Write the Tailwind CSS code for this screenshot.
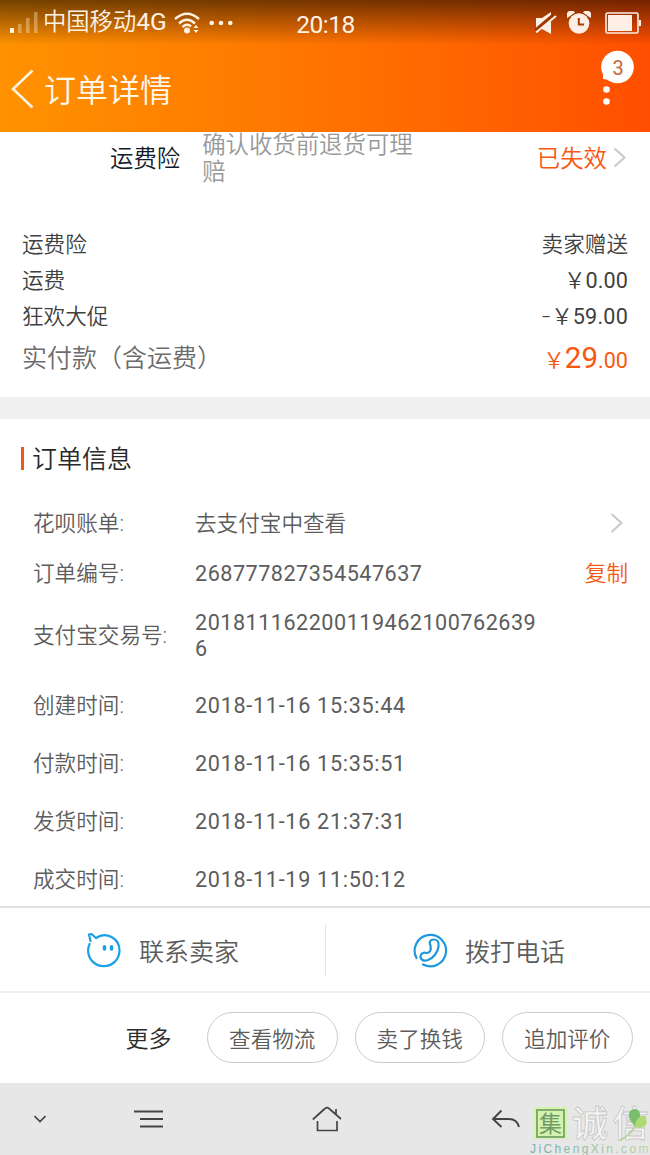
<!DOCTYPE html>
<html lang="zh-CN">
<head>
    <meta charset="UTF-8">
    <meta name="viewport" content="width=device-width, initial-scale=1.0">
    <title>订单详情</title>
    <script src="https://cdn.jsdelivr.net/npm/@tailwindcss/browser@4"></script>
</head>
<body class="w-[650px] h-[1155px] overflow-hidden bg-white font-['Roboto','Noto_Sans_CJK_SC',sans-serif] font-[350] text-[21.6px] leading-none text-[#5c5c5c]">
    <!-- Header -->
    <header class="h-[132px] bg-linear-to-r from-[#ff9200] to-[#ff4e00]">
        <div class="h-[45px] bg-linear-to-b from-black/55 to-transparent">
            <div class="grid grid-cols-3 items-center h-[45px] pl-[10px] pr-[9px] text-[#fff3e6]">
                <div class="flex items-center">
                    <svg class="w-[28px] h-[24px] shrink-0" viewBox="0 0 28 24" fill="#fff3e6">
                        <rect x="0" y="17" width="4" height="5"/>
                        <g opacity=".35">
                            <rect x="8" y="13" width="3.5" height="9"/>
                            <rect x="16" y="7" width="3.5" height="15"/>
                            <rect x="24" y="1" width="3.5" height="21"/>
                        </g>
                    </svg>
                    <span class="ml-[5px] text-[23.3px] font-[350] whitespace-nowrap">中国移动<span class="text-[24.5px] font-normal">4G</span></span>
                    <svg class="ml-[7px] w-[26px] h-[22px] shrink-0" viewBox="0 0 26 22" fill="none" stroke="#fff3e6" stroke-width="2.4">
                        <path d="M1 7Q13-3.500 25 7M5 11.500Q13 4 21 11.500M8.500 15Q13 11 17 14.500"/>
                        <circle cx="13" cy="18.500" r="3" fill="#fff3e6" stroke="none"/>
                        <path d="M19.500 16l2.500-3 2.500 3zM19.500 18l2.500 3 2.500-3z" fill="#fff3e6" stroke="none"/>
                    </svg>
                    <svg class="ml-[9px] w-[24px] h-[6px] shrink-0" viewBox="0 0 24 6" fill="#fff3e6">
                        <circle cx="2.700" cy="3" r="2.300"/><circle cx="12" cy="3" r="2.300"/><circle cx="21.300" cy="3" r="2.300"/>
                    </svg>
                </div>
                <div class="text-center text-[24.5px] font-normal pt-[5px] tracking-[-0.5px]">20:18</div>
                <div class="flex items-center justify-end">
                    <svg class="w-[22px] h-[24px]" viewBox="0 0 22 24">
                        <path d="M1 7h6l9-6v22l-9-5H1z" fill="#fdeee6"/>
                        <path d="M0 20L20 3" stroke="#9c3800" stroke-width="4"/>
                        <path d="M1 21.500L21 5" stroke="#fdeee6" stroke-width="2"/>
                    </svg>
                    <svg class="ml-[10px] w-[24px] h-[24px]" viewBox="0 0 24 24" fill="#fdeee6">
                        <path d="M.3 7A4.600 4.600 0 0 1 8 1.500zM23.700 7A4.600 4.600 0 0 0 16 1.500z"/>
                        <circle cx="12" cy="12.500" r="10.300"/>
                        <path d="M11.800 7v6.500H17" fill="none" stroke="#a53c00" stroke-width="2"/>
                    </svg>
                    <svg class="ml-[14px] w-[36px] h-[22px]" viewBox="0 0 36 22" fill="#fdeee6">
                        <rect x="1" y="1" width="32" height="20" rx="1.500" fill="none" stroke="#fdeee6" stroke-width="1.600"/>
                        <rect x="3" y="3" width="24" height="16"/>
                        <rect x="34" y="8" width="2" height="6"/>
                    </svg>
                </div>
            </div>
        </div>
        <div class="flex items-center h-[87px] pl-[11px] pr-[15px] text-[#fff9ef]">
            <svg class="w-[23px] h-[40px]" viewBox="0 0 23 40" fill="none" stroke="#fff3dc" stroke-width="2.600">
                <path d="M21.500 1.500L2 20l19.500 18.500"/>
            </svg>
            <h1 class="ml-[10px] pt-[5px] text-[32px] font-[350]">订单详情</h1>
            <svg class="ml-auto mb-[22px] w-[36px] h-[56px]" viewBox="0 0 36 56" fill="#fff">
                <circle cx="18.500" cy="17" r="16.300"/>
                <path d="M4 20v9l7 1z"/>
                <circle cx="7.500" cy="39.500" r="3.300"/><circle cx="7.500" cy="51.500" r="3.300"/>
                <text x="19" y="24.500" text-anchor="middle" font-size="20" font-weight="400" fill="#c8643c">3</text>
            </svg>
        </div>
    </header>

    <main class="h-[774px]">
        <!-- Freight insurance -->
        <section class="flex h-[94px] pl-[110px] pr-[23px] text-[23.4px]">
            <div class="mt-[16px] text-[#111c28]">运费险</div>
            <div class="ml-[22px] w-[212px] leading-[27px] text-[#999]">确认收货前退货可理赔</div>
            <div class="ml-auto mt-[16px] flex items-start text-[#f7570f]">
                已失效
                <svg class="ml-[6px] mr-px -mt-px w-[13px] h-[21px]" viewBox="0 0 13 21" fill="none" stroke="#c8c8c8" stroke-width="2"><path d="M1.500 1.500l10 9-10 9"/></svg>
            </div>
        </section>

        <!-- Price summary -->
        <section class="h-[171px] px-[22px] text-[#404040]">
            <div class="flex items-center justify-between h-[36px] pt-[2px]"><span>运费险</span><span>卖家赠送</span></div>
            <div class="flex items-center justify-between h-[36px] pt-[2px]"><span>运费</span><span>￥<span class="font-normal tracking-[0.1px]">0.00</span></span></div>
            <div class="flex items-center justify-between h-[36px] pt-[2px]"><span>狂欢大促</span><span class="flex"><span class="mr-[2px] scale-x-140">-</span>￥<span class="font-normal tracking-[0.2px]">59.00</span></span></div>
            <div class="flex items-center justify-between h-[48px] text-[#6c6c6c]">
                <span class="text-[25px]">实付款（含运费）</span>
                <span class="pt-[2px] text-[#f7570f]">￥<span class="text-[29.5px] font-normal">29</span><span class="font-normal">.00</span></span>
            </div>
        </section>
        <div class="h-[22px] bg-[#f0f0f0]"></div>

        <!-- Order info -->
        <section class="pl-[33px] pr-[22px]">
            <h2 class="-ml-[12px] flex items-center h-[79px] text-[25px] font-[350] text-[#2a2a2a]">
                <span class="mr-[8.5px] w-[2.5px] h-[23px] bg-[#f0561d]"></span><span class="pt-[2px]">订单信息</span>
            </h2>
            <div class="flex items-center h-[50px]">
                <span class="w-[162px] pt-[2px]">花呗账单:</span><span class="pt-[2px]">去支付宝中查看</span>
                <svg class="ml-auto mr-[5px] w-[13px] h-[21px]" viewBox="0 0 13 21" fill="none" stroke="#c8c8c8" stroke-width="2"><path d="M1.500 1l10 9-10 9"/></svg>
            </div>
            <div class="flex items-center h-[50px]">
                <span class="w-[162px] pt-px">订单编号:</span><span class="pt-[2px] font-normal tracking-[0.5px]">268777827354547637</span>
                <span class="ml-auto pt-[2px] text-[#f7570f]">复制</span>
            </div>
            <div class="flex items-center h-[74px] mb-[5px]">
                <span class="w-[162px] pt-px">支付宝交易号:</span><span class="w-[347px] pt-[2px] leading-[26px] font-normal tracking-[0.5px] break-all">2018111622001194621007626396</span>
            </div>
            <div class="flex items-center h-[58px]"><span class="w-[162px]">创建时间:</span><span class="font-normal tracking-[0.7px]">2018-11-16 15:35:44</span></div>
            <div class="flex items-center h-[58px]"><span class="w-[162px]">付款时间:</span><span class="font-normal tracking-[0.7px]">2018-11-16 15:35:51</span></div>
            <div class="flex items-center h-[58px]"><span class="w-[162px]">发货时间:</span><span class="font-normal tracking-[0.7px]">2018-11-16 21:37:31</span></div>
            <div class="flex items-center h-[56px]"><span class="w-[162px] pt-px">成交时间:</span><span class="pt-[2px] font-normal tracking-[0.7px]">2018-11-19 11:50:12</span></div>
        </section>
    </main>

    <!-- Contact bar -->
    <div class="flex items-center h-[87px] border-t-2 border-b-2 border-t-[#e0e0e0] border-b-[#f0f0f0] text-[25px]">
        <div class="flex items-center w-[326px] h-[51px] pl-[86px] border-r border-[#e4e4e4]">
            <svg class="w-[36px] h-[36px]" viewBox="0 0 36 36" fill="none" stroke="#1ba0e6" stroke-width="2.200" stroke-linecap="round" stroke-linejoin="round">
                <path d="M4.500 9L3 2.500 5.500 2l4.500 4C20-1 33.500 6 33.500 18.500a15.700 15.700 0 0 1-31.400 0q0-3.500 1.500-6.500"/>
                <path d="M18.500 14.800v2.200M25.500 14.800v2.200" stroke-width="3.500"/>
            </svg>
            <span class="ml-[17px] pt-[6px]">联系卖家</span>
        </div>
        <div class="flex items-center pl-[85.5px]">
            <svg class="w-[36px] h-[36px]" viewBox="0 0 36 36" fill="none" stroke="#1e98dc" stroke-width="2.200" stroke-linecap="round" stroke-linejoin="round">
                <path d="M4.500 26A15.700 15.700 0 1 1 11 32.500"/>
                <path d="M18.500 13.500C16.500 9 19 7.500 22 7.500c4 0 5 3 4.500 7-.7 6-5 11.500-10.500 13.500-4 1.500-7.500 0-7.500-3.500 0-3 3-4.500 6-3.500 3.500 0 5-3 4-7.500z"/>
            </svg>
            <span class="ml-[17.5px] pt-[6px]">拨打电话</span>
        </div>
    </div>

    <!-- More actions -->
    <div class="flex items-center justify-end gap-[17px] h-[90px] pr-[17.5px] pb-px">
        <span class="mr-[18.5px] pt-[3px] text-[23px] text-[#2c2c2c]">更多</span>
        <button class="w-[130.5px] h-[51px] pt-[4px] rounded-full border border-[#ccc]">查看物流</button>
        <button class="w-[130.5px] h-[51px] pt-[4px] rounded-full border border-[#ccc]">卖了换钱</button>
        <button class="w-[130.5px] h-[51px] pt-[4px] rounded-full border border-[#ccc]">追加评价</button>
    </div>

    <!-- System navigation -->
    <nav class="relative flex items-center h-[72px] pl-[34px] bg-[#e7e7e7]">
        <svg class="w-[12px] h-[8px]" viewBox="0 0 12 8" fill="none" stroke="#444" stroke-width="1.600"><path d="M.5 1L6 6.500 11.500 1"/></svg>
        <svg class="ml-[88px] w-[30px] h-[20px]" viewBox="0 0 30 20" fill="none" stroke="#444" stroke-width="1.800"><path d="M0 2.500h29M6 10h23M6 17.500h23"/></svg>
        <svg class="ml-[148px] w-[30px] h-[28px]" viewBox="0 0 30 28" fill="none" stroke="#444" stroke-width="1.700" stroke-linejoin="round"><path d="M.8 14.500L13 3.500q2-2 4 0l12 10.500M24 9V4M5.500 16v9.500h19.500V16"/></svg>
        <svg class="ml-[149px] w-[30px] h-[20px]" viewBox="0 0 30 20" fill="none" stroke="#444" stroke-width="1.900"><path d="M10.500 1.500L2 10l8.500 8M2 10h16q8 0 10 8"/></svg>
        <svg class="absolute left-[528px] top-[18px] w-[122px] h-[54px]" viewBox="0 0 122 54">
            <defs>
                <linearGradient id="site" gradientUnits="userSpaceOnUse" x1="0" y1="0" x2="122" y2="0"><stop stop-color="#74aab4"/><stop offset="1" stop-color="#b5d99a"/></linearGradient>
            </defs>
            <rect x="6" y="6" width="33" height="32" fill="#d5f2ae"/>
            <rect x="9" y="9" width="27" height="27" fill="none" stroke="#78a56a" stroke-width="1.800"/>
            <text x="22.500" y="31" text-anchor="middle" font-size="23" font-weight="400" fill="#6f9c68">集</text>
            <g font-size="36" font-weight="500" fill="#f5f5f5" stroke="#c6c6c6" stroke-width=".8">
                <text x="44" y="36">诚</text><text x="84.500" y="36">信</text>
            </g>
            <path d="M107 25q-9-9-5-15 5-4 9 0 3 5-2 13z" fill="#79bd6d"/>
            <path d="M107 26q0-7 6-11 7-1 5 4 2 3-1 6-4 3-10 1z" fill="#b0da72"/>
            <path d="M107 25q-4 9-15 14" fill="none" stroke="#a8d38c" stroke-width="1.500"/>
            <text x="2" y="52" font-family="Liberation Sans" font-size="12" font-weight="400" letter-spacing="2.400" fill="url(#site)">JiChengXin.com</text>
        </svg>
    </nav>
</body>
</html>
